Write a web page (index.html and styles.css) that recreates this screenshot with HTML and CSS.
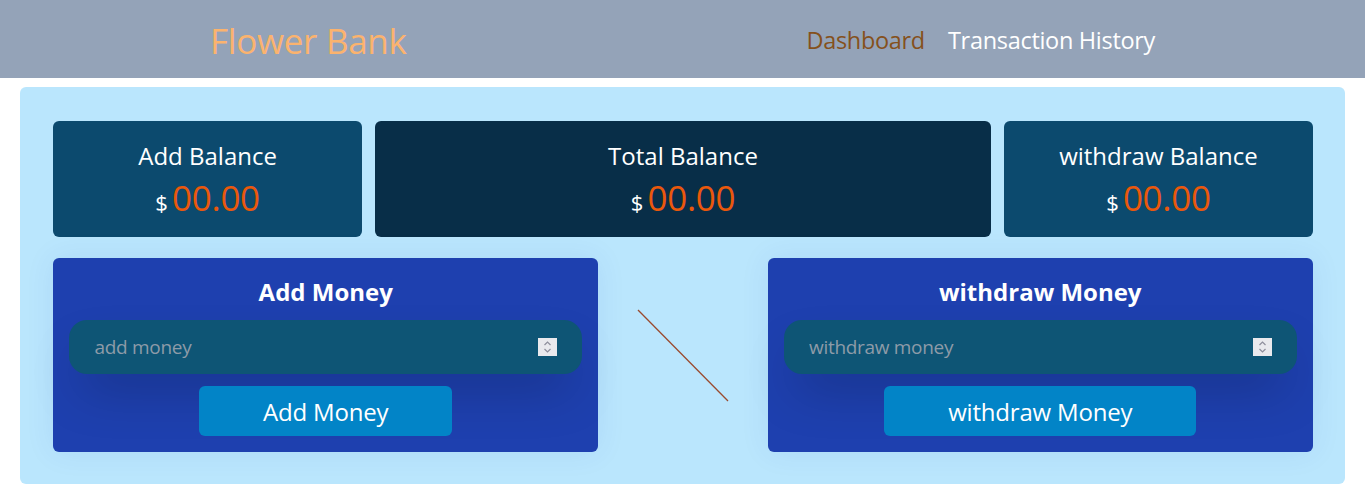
FILE: index.html
```html
<!DOCTYPE html>
<html lang="en">
<head>
<meta charset="utf-8">
<title>Flower Bank</title>
<link rel="stylesheet" href="styles.css">
</head>
<body>
<header class="topbar">
  <h1 class="logo">Flower Bank</h1>
  <nav class="nav">
    <a class="nav-link active" href="#">Dashboard</a>
    <a class="nav-link" href="#">Transaction History</a>
  </nav>
</header>
<main class="board">
  <section class="stats">
    <div class="stat">
      <h2 class="stat-title">Add Balance</h2>
      <p class="stat-amount"><span class="cur">$</span> <span class="val">00.00</span></p>
    </div>
    <div class="stat stat-total">
      <h2 class="stat-title">Total Balance</h2>
      <p class="stat-amount"><span class="cur">$</span> <span class="val">00.00</span></p>
    </div>
    <div class="stat">
      <h2 class="stat-title">withdraw Balance</h2>
      <p class="stat-amount"><span class="cur">$</span> <span class="val">00.00</span></p>
    </div>
  </section>
  <section class="actions">
    <div class="panel">
      <h3 class="panel-title">Add Money</h3>
      <div class="field">
        <input class="field-input" type="text" placeholder="add money">
        <span class="spin"><svg width="9" height="14" viewBox="0 0 9 14"><path d="M1.5 5 L4.5 2 L7.5 5 M1.5 9 L4.5 12 L7.5 9" fill="none" stroke="#8e8e9c" stroke-width="1.2"/></svg></span>
      </div>
      <button class="btn">Add Money</button>
    </div>
    <div class="divider">
      <svg width="92" height="93" viewBox="0 0 92 93"><line x1="1" y1="1" x2="91" y2="92" stroke="#9a4a2e" stroke-width="1.3"/></svg>
    </div>
    <div class="panel">
      <h3 class="panel-title">withdraw Money</h3>
      <div class="field">
        <input class="field-input" type="text" placeholder="withdraw money">
        <span class="spin"><svg width="9" height="14" viewBox="0 0 9 14"><path d="M1.5 5 L4.5 2 L7.5 5 M1.5 9 L4.5 12 L7.5 9" fill="none" stroke="#8e8e9c" stroke-width="1.2"/></svg></span>
      </div>
      <button class="btn">withdraw Money</button>
    </div>
  </section>
</main>
</body>
</html>
```
FILE: styles.css
```css
* { box-sizing: border-box; }
body {
  margin: 0;
  font-family: "Open Sans", "Noto Sans", sans-serif;
  background: #ffffff;
  color: #fff;
}
.topbar {
  height: 78px;
  background: #94a3b8;
  display: flex;
  justify-content: space-around;
  align-items: center;
  padding: 2px 10px 0;
}
.logo {
  margin: 0;
  font-weight: 400;
  font-size: 35px;
  color: #fbb36e;
  letter-spacing: -0.3px;
}
.nav {
  display: flex;
  gap: 23px;
}
.nav-link {
  color: #fff;
  text-decoration: none;
  font-size: 23.5px;
  letter-spacing: -0.3px;
}
.nav-link.active { color: #85511c; }
.board {
  width: 97%;
  margin: 9px auto 0;
  background: #bae6fd;
  border-radius: 6px;
  padding: 34px 32px 32px 33px;
}
.stats {
  display: flex;
  gap: 13px;
}
.stat {
  flex: 1;
  height: 116px;
  background: #0c4a6e;
  border-radius: 6px;
  display: flex;
  flex-direction: column;
  align-items: center;
  justify-content: center;
  gap: 5px;
  padding-top: 10px;
}
.stat-total { flex: 2; background: #082e48; }
.stat-title {
  margin: 0;
  font-weight: 400;
  font-size: 24px;
  line-height: 30px;
  letter-spacing: 0;
}
.stat-amount {
  margin: 0;
  line-height: 44px;
}
.cur { font-size: 22px; }
.val { font-size: 35px; color: #ea580c; letter-spacing: -0.3px; }
.actions {
  margin-top: 21px;
  display: grid;
  grid-template-columns: 1fr 170px 1fr;
}
.panel {
  background: #1e40af;
  border-radius: 6px;
  padding: 18px 16px 16px;
  display: flex;
  flex-direction: column;
  align-items: center;
  box-shadow: 0 0 30px rgba(30, 64, 175, 0.08);
}
.panel-title {
  margin: 0 0 12px;
  font-size: 24px;
  line-height: 32px;
  font-weight: 700;
  letter-spacing: 0;
}
.field {
  width: 100%;
  height: 54px;
  background: #0e5575;
  border-radius: 18px;
  display: flex;
  align-items: center;
  padding: 0 25px;
  box-shadow: 0 25px 50px -12px rgba(0, 0, 0, 0.25);
}
.field-input {
  flex: 1;
  min-width: 0;
  background: transparent;
  border: 0;
  outline: none;
  font: inherit;
  font-size: 19px;
  color: #fff;
  letter-spacing: -0.3px;
  padding: 0;
}
.field-input::placeholder { color: #8d9ba8; }
.spin {
  width: 19px;
  height: 18px;
  background: #e9e9ed;
  display: flex;
  align-items: center;
  justify-content: center;
}
.btn {
  margin-top: 12px;
  height: 50px;
  padding: 0 64px;
  border: 0;
  border-radius: 6px;
  background: #0284c7;
  color: #fff;
  font: inherit;
  font-size: 24px;
  letter-spacing: -0.2px;
}
.divider {
  display: flex;
  align-items: center;
  justify-content: center;
}
```
